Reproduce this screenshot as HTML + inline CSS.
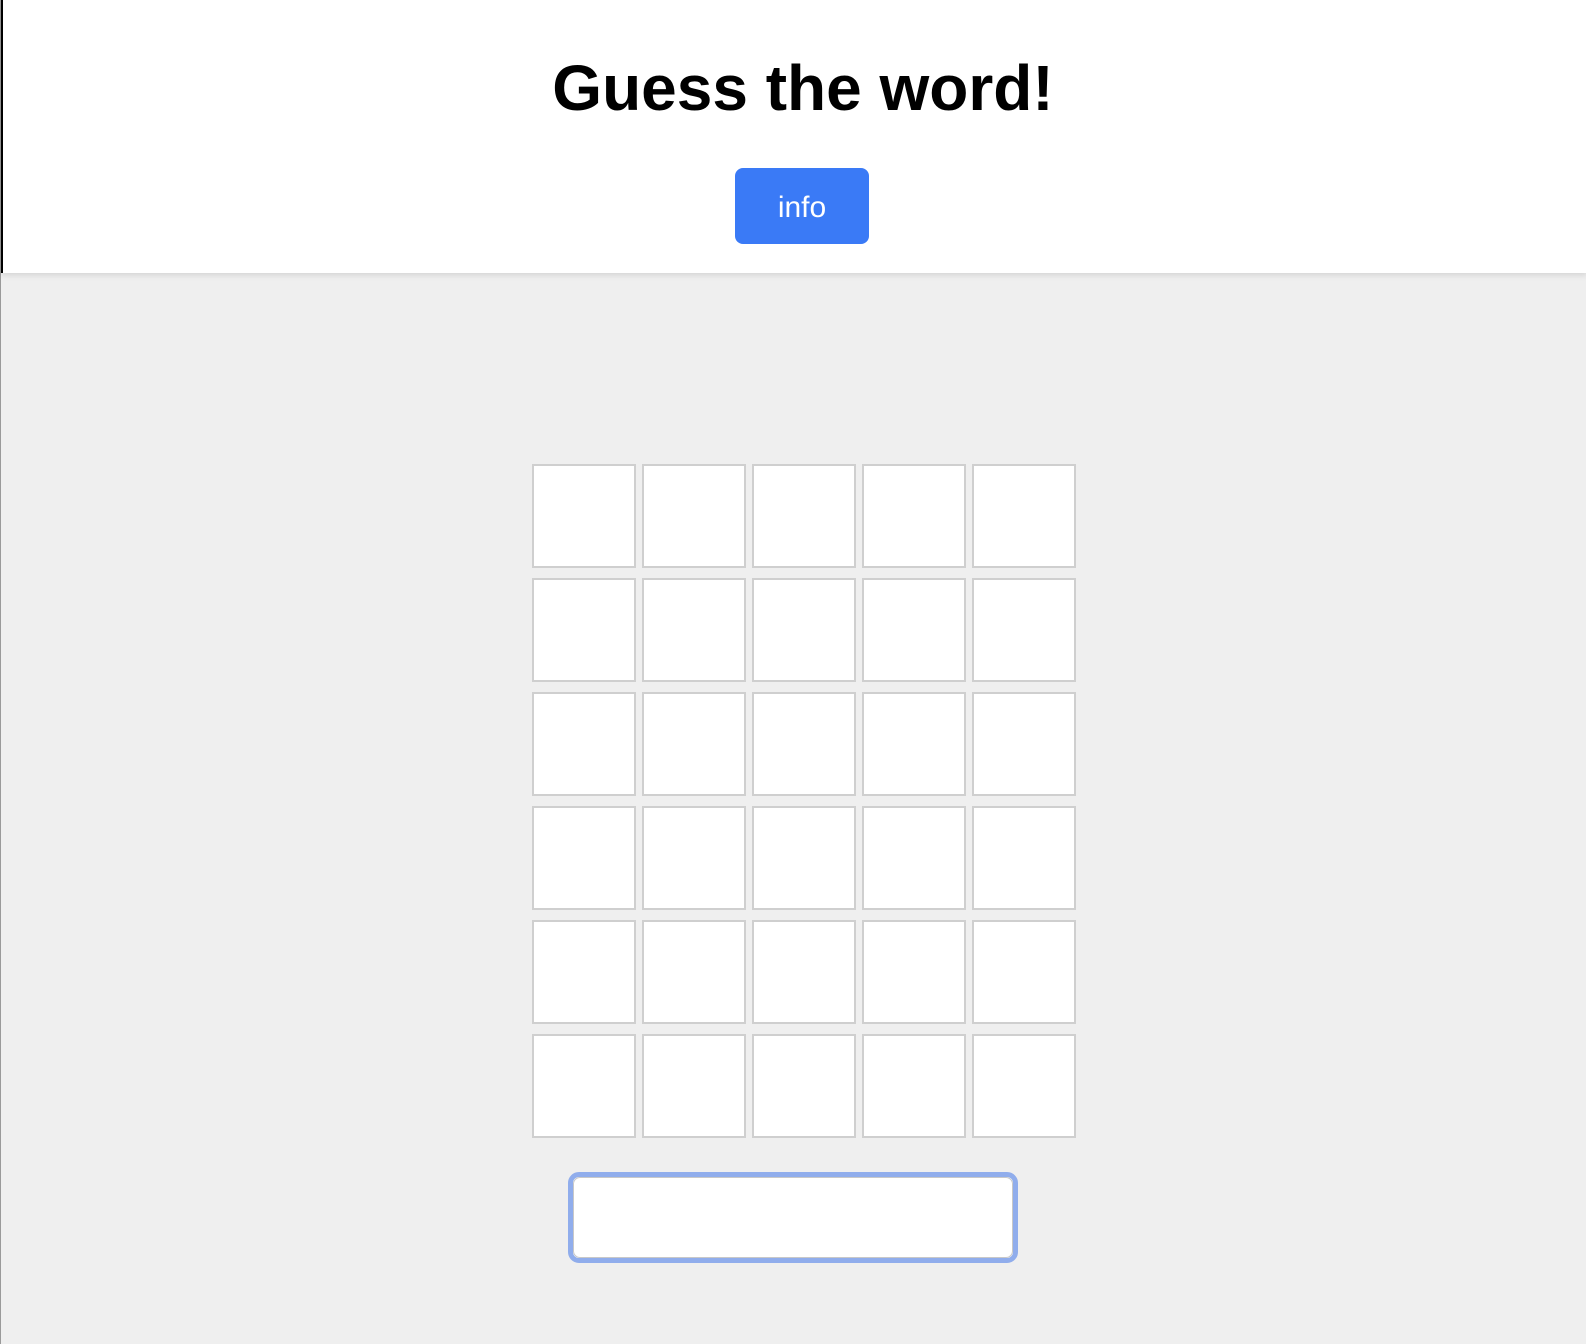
<!DOCTYPE html>
<html><head><meta charset="utf-8"><style>
*{box-sizing:border-box;margin:0;padding:0}
html,body{width:1586px;height:1344px;overflow:hidden;background:#efefef;font-family:"Liberation Sans",Arial,sans-serif}
body{position:relative;border-left:1px solid #9a9a9a}
.hdr{position:absolute;left:0;top:0;width:1586px;height:273px;background:#fff;box-shadow:0 2px 6px rgba(0,0,0,0.12);border-left:2px solid #000}
h1{position:absolute;left:0;width:1604px;top:50px;text-align:center;font-size:64px;font-weight:bold;color:#000;line-height:76px}
.btn{position:absolute;left:734px;top:168px;width:134px;height:76px;background:#3a7af6;border-radius:8px;color:#fff;font-size:30px;line-height:80px;text-align:center}
.tile{position:absolute;width:104px;height:104px;background:#fff;border:2px solid #cfcfcf}
.inp{position:absolute;left:567px;top:1172px;width:450px;height:91px;border:5px solid #90adec;border-radius:11px;background:#fff}
.inp div{position:absolute;inset:0;border:1.5px solid #c8c8c8;border-radius:7px}
</style></head><body>
<div class="hdr"></div>
<h1>Guess the word!</h1>
<div class="btn">info</div>
<div id="g"></div>
<div class="inp"><div></div></div>
<script>
var g=document.getElementById('g'),h='';
for(var r=0;r<6;r++)for(var c=0;c<5;c++)h+='<div class="tile" style="left:'+(531+c*110)+'px;top:'+(464+r*114)+'px"></div>';
g.innerHTML=h;
</script>
</body></html>
